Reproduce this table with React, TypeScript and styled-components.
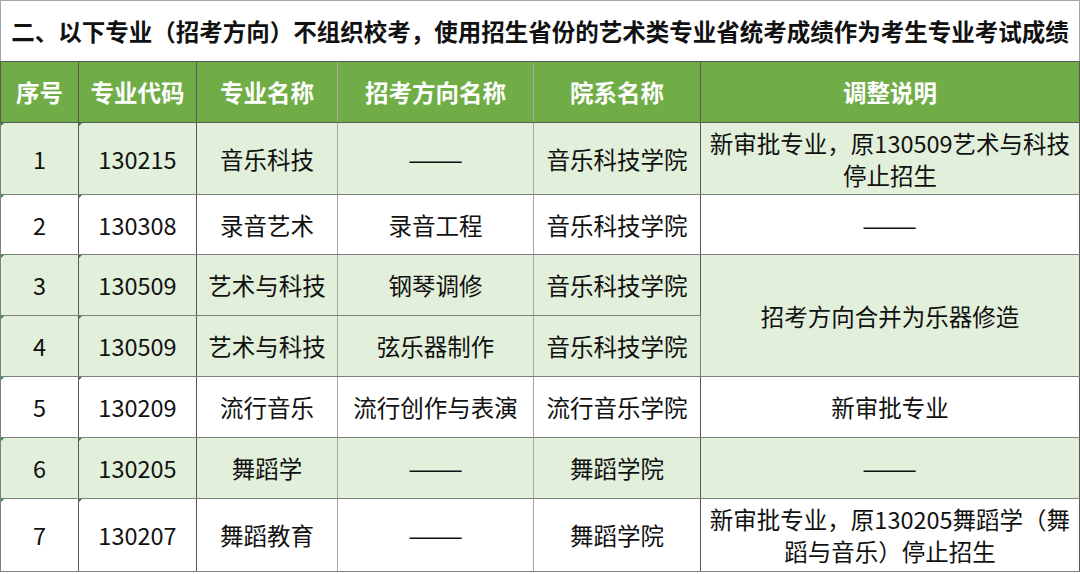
import styled, { createGlobalStyle } from 'styled-components';

const GlobalStyle = createGlobalStyle`
  html, body {
    margin: 0;
    padding: 0;
    background: #ffffff;
  }
  body {
    font-family: 'Noto Sans CJK SC', 'Noto Sans', sans-serif;
    color: #111111;
  }
`;

const Sheet = styled.table`
  width: 1080px;
  border-collapse: collapse;
  table-layout: fixed;
  font-size: 23.5px;
`;

const TitleRow = styled.tr`
  height: 61px;
`;

const TitleCell = styled.th`
  padding: 0;
  border: 1px solid #a6a6a6;
  border-bottom-color: #595959;
  font-weight: 700;
  text-align: center;
  color: #111111;
  white-space: nowrap;
  line-height: 28px;
`;

const HeadRow = styled.tr`
  height: 61px;
  background: #70ad47;
`;

const HeadCell = styled.th<{ $soft?: boolean }>`
  padding: 0;
  border: 1px solid #595959;
  border-right-color: ${(p) => (p.$soft ? '#a6a6a6' : '#595959')};
  color: #ffffff;
  font-weight: 700;
  text-align: center;
  line-height: 28px;
`;

const Row = styled.tr<{ $shade?: boolean; $h: number }>`
  height: ${(p) => p.$h}px;
  background: ${(p) => (p.$shade ? '#e2efda' : '#ffffff')};
`;

const Cell = styled.td<{ $soft?: boolean; $mark?: boolean }>`
  position: relative;
  padding: 0 4px;
  border: 1px solid #7f7f7f;
  border-right-color: ${(p) => (p.$soft ? '#a6a6a6' : '#595959')};
  text-align: center;
  vertical-align: middle;
  line-height: 32px;
  font-weight: 400;

  ${(p) =>
    p.$mark &&
    `
    &::before {
      content: '';
      position: absolute;
      top: 0;
      left: 0;
      border-top: 3px solid #1e8a2e;
      border-right: 3px solid transparent;
    }
  `}
`;

const NoteCell = styled(Cell)`
  padding: 0 6px;
`;

const Dash = styled.span`
  display: inline-block;
  transform: scaleX(1.4);
`;

type Item = {
  no: string;
  code: string;
  major: string;
  direction: string;
  school: string;
  note?: string;
  span?: number;
  shade?: boolean;
  height: number;
};

const DASH = '——';

const items: Item[] = [
  { no: '1', code: '130215', major: '音乐科技', direction: DASH, school: '音乐科技学院', note: '新审批专业，原130509艺术与科技停止招生', shade: true, height: 72 },
  { no: '2', code: '130308', major: '录音艺术', direction: '录音工程', school: '音乐科技学院', note: DASH, height: 60 },
  { no: '3', code: '130509', major: '艺术与科技', direction: '钢琴调修', school: '音乐科技学院', note: '招考方向合并为乐器修造', span: 2, shade: true, height: 61 },
  { no: '4', code: '130509', major: '艺术与科技', direction: '弦乐器制作', school: '音乐科技学院', shade: true, height: 61 },
  { no: '5', code: '130209', major: '流行音乐', direction: '流行创作与表演', school: '流行音乐学院', note: '新审批专业', height: 61 },
  { no: '6', code: '130205', major: '舞蹈学', direction: DASH, school: '舞蹈学院', note: DASH, shade: true, height: 61 },
  { no: '7', code: '130207', major: '舞蹈教育', direction: DASH, school: '舞蹈学院', note: '新审批专业，原130205舞蹈学（舞蹈与音乐）停止招生', height: 73 },
];

const show = (text: string) => (text === DASH ? <Dash>{text}</Dash> : text);

const App = () => {
  return (
    <>
      <GlobalStyle />
      <Sheet>
        <colgroup>
          <col style={{ width: 78 }} />
          <col style={{ width: 118 }} />
          <col style={{ width: 141 }} />
          <col style={{ width: 196 }} />
          <col style={{ width: 167 }} />
          <col />
        </colgroup>
        <thead>
          <TitleRow>
            <TitleCell colSpan={6}>
              二、以下专业（招考方向）不组织校考，使用招生省份的艺术类专业省统考成绩作为考生专业考试成绩
            </TitleCell>
          </TitleRow>
          <HeadRow>
            <HeadCell>序号</HeadCell>
            <HeadCell>专业代码</HeadCell>
            <HeadCell $soft>专业名称</HeadCell>
            <HeadCell $soft>招考方向名称</HeadCell>
            <HeadCell>院系名称</HeadCell>
            <HeadCell>调整说明</HeadCell>
          </HeadRow>
        </thead>
        <tbody>
          {items.map((item) => (
            <Row key={item.no} $shade={item.shade} $h={item.height}>
              <Cell $mark>{item.no}</Cell>
              <Cell $mark>{item.code}</Cell>
              <Cell $soft>{item.major}</Cell>
              <Cell $soft>{show(item.direction)}</Cell>
              <Cell>{item.school}</Cell>
              {item.note !== undefined && (
                <NoteCell rowSpan={item.span}>{show(item.note)}</NoteCell>
              )}
            </Row>
          ))}
        </tbody>
      </Sheet>
    </>
  );
};

export default App;
